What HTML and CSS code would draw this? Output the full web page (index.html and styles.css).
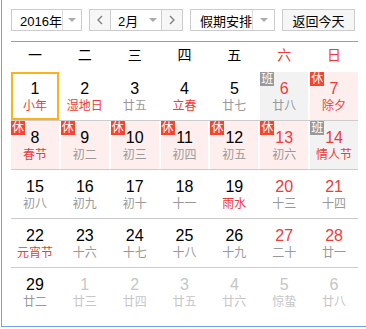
FILE: index.html
```html
<!DOCTYPE html>
<html lang="zh-CN">
  <head>
    <meta charset="UTF-8" />
    <meta name="viewport" content="width=device-width, initial-scale=1.0" />
    <title>万年历</title>
    <link rel="stylesheet" href="styles.css">
  </head>
  <body>
    <div class="calendar">
      <div class="toolbar">
        <div class="select year">
          <span class="label">2016年</span>
          <span class="drop"><i class="caret"></i></span>
        </div>
        <div class="select month">
          <button type="button" class="nav prev">
            <svg width="6" height="10" viewBox="0 0 6 10"><polyline points="5,1 1,5 5,9" fill="none" stroke="#777" stroke-width="1.2" /></svg>
          </button>
          <span class="label">2月</span>
          <span class="drop plain"><i class="caret"></i></span>
          <button type="button" class="nav next">
            <svg width="6" height="10" viewBox="0 0 6 10"><polyline points="1,1 5,5 1,9" fill="none" stroke="#777" stroke-width="1.2" /></svg>
          </button>
        </div>
        <div class="select holiday">
          <span class="label">假期安排</span>
          <span class="drop"><i class="caret"></i></span>
        </div>
        <button type="button" class="today-btn">返回今天</button>
      </div>

      <div class="week-head">
        <span>一</span><span>二</span><span>三</span><span>四</span><span>五</span>
        <span class="red">六</span><span class="red">日</span>
      </div>

      <div class="row">
        <div class="day today"><b>1</b><i class="fest">小年</i></div>
        <div class="day"><b>2</b><i class="fest">湿地日</i></div>
        <div class="day"><b>3</b><i>廿五</i></div>
        <div class="day"><b>4</b><i class="fest">立春</i></div>
        <div class="day"><b>5</b><i>廿七</i></div>
        <div class="day work weekend"><span class="tag">班</span><b>6</b><i>廿八</i></div>
        <div class="day rest weekend"><span class="tag">休</span><b>7</b><i class="fest">除夕</i></div>
      </div>
      <div class="row">
        <div class="day rest"><span class="tag">休</span><b>8</b><i class="fest">春节</i></div>
        <div class="day rest"><span class="tag">休</span><b>9</b><i>初二</i></div>
        <div class="day rest"><span class="tag">休</span><b>10</b><i>初三</i></div>
        <div class="day rest"><span class="tag">休</span><b>11</b><i>初四</i></div>
        <div class="day rest"><span class="tag">休</span><b>12</b><i>初五</i></div>
        <div class="day rest weekend"><span class="tag">休</span><b>13</b><i>初六</i></div>
        <div class="day work weekend"><span class="tag">班</span><b>14</b><i class="fest">情人节</i></div>
      </div>
      <div class="row">
        <div class="day"><b>15</b><i>初八</i></div>
        <div class="day"><b>16</b><i>初九</i></div>
        <div class="day"><b>17</b><i>初十</i></div>
        <div class="day"><b>18</b><i>十一</i></div>
        <div class="day"><b>19</b><i class="fest">雨水</i></div>
        <div class="day weekend"><b>20</b><i>十三</i></div>
        <div class="day weekend"><b>21</b><i>十四</i></div>
      </div>
      <div class="row">
        <div class="day"><b>22</b><i class="fest">元宵节</i></div>
        <div class="day"><b>23</b><i>十六</i></div>
        <div class="day"><b>24</b><i>十七</i></div>
        <div class="day"><b>25</b><i>十八</i></div>
        <div class="day"><b>26</b><i>十九</i></div>
        <div class="day weekend"><b>27</b><i>二十</i></div>
        <div class="day weekend"><b>28</b><i>廿一</i></div>
      </div>
      <div class="row last">
        <div class="day"><b>29</b><i>廿二</i></div>
        <div class="day other"><b>1</b><i>廿三</i></div>
        <div class="day other"><b>2</b><i>廿四</i></div>
        <div class="day other"><b>3</b><i>廿五</i></div>
        <div class="day other"><b>4</b><i>廿六</i></div>
        <div class="day other"><b>5</b><i>惊蛰</i></div>
        <div class="day other"><b>6</b><i>廿八</i></div>
      </div>
    </div>
  </body>
</html>
```

FILE: styles.css
```css
/*********** base ***********/
* {
  box-sizing: border-box;
}

body {
  margin: 0;
  overflow: hidden;
  font-family: "Liberation Sans", "Noto Sans CJK SC", sans-serif;
  color: #000;
  background: #fff;
}

.calendar {
  margin-left: 1px;
  width: 365px;
  border-left: 1px solid #6ea6e8;
  border-bottom: 1px solid #6ea6e8;
  padding: 9px 8px 10px 9px;
}

/*********** toolbar ***********/
.toolbar {
  display: flex;
  gap: 7px;
  height: 22px;
}

.select {
  display: flex;
  align-items: stretch;
  height: 22px;
  border: 1px solid #ccc;
  background: #fff;
  font-size: 13px;
}

.select .label {
  flex: 1;
  display: flex;
  align-items: center;
  padding-left: 8px;
  white-space: nowrap;
}

.drop {
  width: 22px;
  display: flex;
  align-items: center;
  justify-content: center;
  border-left: 1px solid #ddd;
}

.drop.plain {
  border-left: none;
  width: 16px;
}

/* little grey triangle */
.caret {
  width: 0;
  height: 0;
  border-left: 4px solid transparent;
  border-right: 4px solid transparent;
  border-top: 4px solid #aaa;
}

.year {
  width: 71px;
}

.month {
  width: 94px;
}

.month .label {
  padding-left: 7px;
}

.nav {
  width: 21px;
  border: none;
  padding: 0;
  background: #f6f6f6;
  display: flex;
  align-items: center;
  justify-content: center;
  cursor: pointer;
}

.nav.prev {
  border-right: 1px solid #ccc;
}

.nav.next {
  border-left: 1px solid #ccc;
}

.holiday {
  width: 85px;
}

.holiday .label {
  padding-left: 9px;
}

.today-btn {
  width: 73px;
  height: 22px;
  border: 1px solid #ccc;
  background: #f6f6f6;
  font-family: inherit;
  font-size: 13px;
  padding: 0;
  color: #000;
  cursor: pointer;
}

/*********** week header ***********/
.week-head {
  margin-top: 10px;
  border-top: 1px solid #6ea6e8;
  display: grid;
  grid-template-columns: repeat(7, 1fr);
  column-gap: 2px;
  height: 31px;
  line-height: 26px;
  font-size: 14px;
  text-align: center;
}

.red {
  color: #f03a3a;
}

/*********** day grid ***********/
.row {
  display: grid;
  grid-template-columns: repeat(7, 1fr);
  column-gap: 2px;
  height: 49px;
  border-bottom: 1px solid #ccc;
}

.row.last {
  height: 48px;
  border-bottom: none;
}

.day {
  position: relative;
  display: flex;
  flex-direction: column;
  align-items: center;
  padding-top: 7px;
}

.day b {
  font-weight: normal;
  font-size: 16px;
  line-height: 20px;
}

.day i {
  font-style: normal;
  font-size: 12px;
  line-height: 14px;
  color: #999;
}

.day i.fest {
  color: #f03a3a;
}

.weekend b {
  color: #f03a3a;
}

.other b,
.other i {
  color: #c6c6c6;
}

.rest {
  background: #ffeeee;
}

.work {
  background: #f2f2f2;
}

.today {
  border: 2px solid #fbb31d;
  padding-top: 5px;
}

/* holiday / workday badge */
.tag {
  position: absolute;
  left: 0;
  top: 0;
  width: 14px;
  height: 14px;
  font-size: 12px;
  line-height: 14px;
  text-align: center;
  color: #fff;
  background: #f5452e;
}

.work .tag {
  background: #999;
}
```
